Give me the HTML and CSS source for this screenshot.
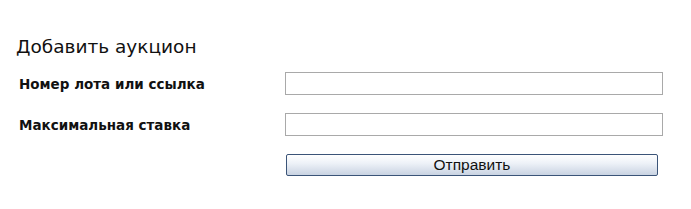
FILE: index.html
```html
<!DOCTYPE html>
<html lang="ru">
<head>
    <meta charset="UTF-8">
    <title>Добавить аукцион</title>
    <link rel="stylesheet" href="styles.css">
</head>
<body>
    <div class="add-auction">
        <h2>Добавить аукцион</h2>
        <form class="auction-form" action="#" method="POST">
            <div class="form-row">
                <label for="field-lot">Номер лота или ссылка</label>
                <input id="field-lot" type="text" name="lot">
            </div>
            <div class="form-row">
                <label for="field-bid">Максимальная ставка</label>
                <input id="field-bid" type="text" name="bid">
            </div>
            <div class="form-row">
                <span></span>
                <button type="submit">Отправить</button>
            </div>
        </form>
    </div>
</body>
</html>
```

FILE: styles.css
```css
body {
    margin: 0;
    background-color: #fff;
    color: #111;
    font-family: 'DejaVu Sans', Verdana, sans-serif;
}
.add-auction {
    padding: 34px 28px 0 16px;
}
h2 {
    margin: 0 0 12px 0;
    font-size: 18.5px;
    font-weight: normal;
    line-height: 26px;
}
.form-row {
    display: grid;
    grid-template-columns: 269px 378px;
    align-items: center;
    margin-bottom: 18px;
}
label {
    padding-left: 3px;
    font-size: 13.5px;
    font-weight: bold;
}
input {
    box-sizing: border-box;
    height: 23px;
    margin: 0;
    padding: 2px 4px;
    border: 1px solid #a9a9a9;
    background-color: #fff;
    font-size: 13px;
}
button[type="submit"] {
    box-sizing: border-box;
    width: 372px;
    height: 22px;
    margin: 0 0 0 1px;
    padding: 0;
    border: 1px solid #3b5478;
    border-radius: 2px;
    background: linear-gradient(to bottom, #ffffff 0%, #eef2f8 40%, #c9d3e2 100%);
    color: #111;
    font-family: 'Liberation Sans', Arial, sans-serif;
    font-size: 15.5px;
    cursor: pointer;
}
```
